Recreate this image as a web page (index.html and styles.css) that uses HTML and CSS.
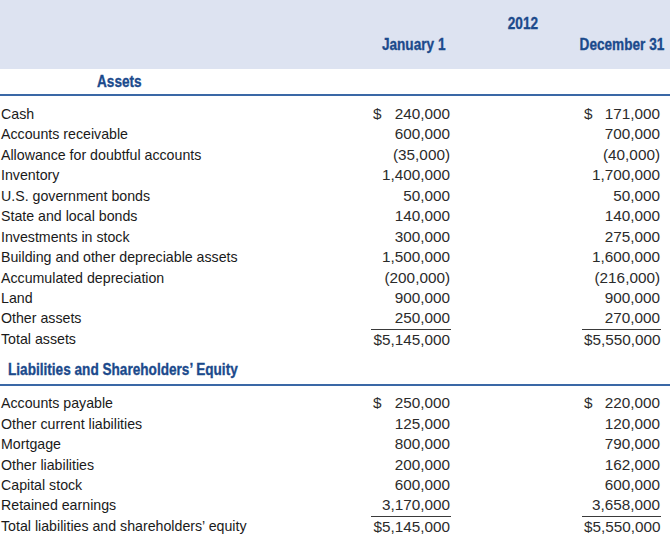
FILE: index.html
```html
<!DOCTYPE html>
<html>
<head>
<meta charset="utf-8">
<link rel="stylesheet" href="styles.css">
</head>
<body>
<div class="sheet">
  <div class="band">
    <div class="row head-row">
      <span></span>
      <span class="year"><em>2012</em></span>
    </div>
    <div class="row head-row dates">
      <span></span>
      <span class="date jan"><em>January 1</em></span>
      <span></span>
      <span class="date dec"><em>December 31</em></span>
    </div>
  </div>

  <div class="section assets-head"><em>Assets</em></div>

  <div class="rows first">
    <div class="row"><span class="label">Cash</span><span class="num"><i>$</i><b>240,000</b></span><span></span><span class="num"><i>$</i><b>171,000</b></span></div>
    <div class="row"><span class="label">Accounts receivable</span><span class="num"><b>600,000</b></span><span></span><span class="num"><b>700,000</b></span></div>
    <div class="row"><span class="label">Allowance for doubtful accounts</span><span class="num"><b>(35,000)</b></span><span></span><span class="num"><b>(40,000)</b></span></div>
    <div class="row"><span class="label">Inventory</span><span class="num"><b>1,400,000</b></span><span></span><span class="num"><b>1,700,000</b></span></div>
    <div class="row"><span class="label">U.S. government bonds</span><span class="num"><b>50,000</b></span><span></span><span class="num"><b>50,000</b></span></div>
    <div class="row"><span class="label">State and local bonds</span><span class="num"><b>140,000</b></span><span></span><span class="num"><b>140,000</b></span></div>
    <div class="row"><span class="label">Investments in stock</span><span class="num"><b>300,000</b></span><span></span><span class="num"><b>275,000</b></span></div>
    <div class="row"><span class="label">Building and other depreciable assets</span><span class="num"><b>1,500,000</b></span><span></span><span class="num"><b>1,600,000</b></span></div>
    <div class="row"><span class="label">Accumulated depreciation</span><span class="num"><b>(200,000)</b></span><span></span><span class="num"><b>(216,000)</b></span></div>
    <div class="row"><span class="label">Land</span><span class="num"><b>900,000</b></span><span></span><span class="num"><b>900,000</b></span></div>
    <div class="row"><span class="label">Other assets</span><span class="num"><b>250,000</b></span><span></span><span class="num"><b>270,000</b></span></div>
    <div class="row"><span class="label">Total assets</span><span class="num sub"><b>$5,145,000</b></span><span></span><span class="num sub"><b>$5,550,000</b></span></div>
  </div>

  <div class="section liab-head"><em>Liabilities and Shareholders’ Equity</em></div>

  <div class="rows second">
    <div class="row"><span class="label">Accounts payable</span><span class="num"><i>$</i><b>250,000</b></span><span></span><span class="num"><i>$</i><b>220,000</b></span></div>
    <div class="row"><span class="label">Other current liabilities</span><span class="num"><b>125,000</b></span><span></span><span class="num"><b>120,000</b></span></div>
    <div class="row"><span class="label">Mortgage</span><span class="num"><b>800,000</b></span><span></span><span class="num"><b>790,000</b></span></div>
    <div class="row"><span class="label">Other liabilities</span><span class="num"><b>200,000</b></span><span></span><span class="num"><b>162,000</b></span></div>
    <div class="row"><span class="label">Capital stock</span><span class="num"><b>600,000</b></span><span></span><span class="num"><b>600,000</b></span></div>
    <div class="row"><span class="label">Retained earnings</span><span class="num"><b>3,170,000</b></span><span></span><span class="num"><b>3,658,000</b></span></div>
    <div class="row"><span class="label">Total liabilities and shareholders’ equity</span><span class="num sub total"><b>$5,145,000</b></span><span></span><span class="num sub total"><b>$5,550,000</b></span></div>
  </div>
</div>
</body>
</html>
```

FILE: styles.css
```css
html, body {
  margin: 0;
  padding: 0;
  background: #ffffff;
}

.sheet {
  width: 670px;
  font-family: "Liberation Sans", Arial, sans-serif;
  color: #231f20;
}

.row {
  display: grid;
  grid-template-columns: 371px 80px 131px 79px;
  height: 20.45px;
  line-height: 20.45px;
  font-size: 14px;
}

.band {
  background: #dde3f1;
  height: 69px;
  box-sizing: border-box;
  padding-top: 14px;
}

.head-row {
  height: auto;
  font-weight: bold;
  font-size: 17px;
  color: #1b4a8c;
}

.head-row em,
.section em {
  font-style: normal;
  display: inline-block;
  white-space: nowrap;
  transform: scaleX(0.8);
  -webkit-text-stroke: 0.35px #1b4a8c;
}

.year {
  grid-column: 2 / 5;
  display: flex;
  justify-content: center;
  padding-left: 14px;
  line-height: 20px;
}

.dates {
  margin-top: 1px;
  line-height: 20px;
}

.date {
  display: flex;
  justify-content: center;
  white-space: nowrap;
}

.jan {
  padding-left: 6px;
}

.dec {
  padding-left: 0;
}

.section {
  font-weight: bold;
  font-size: 17px;
  color: #1b4a8c;
  border-bottom: 2px solid #3a68a6;
  box-sizing: border-box;
}

.section em {
  transform-origin: left center;
}

.assets-head {
  height: 27px;
  line-height: 26px;
  padding-left: 97px;
}

.liab-head {
  height: 37px;
  padding-top: 11px;
  line-height: 20px;
  padding-left: 8px;
}

.rows.first {
  padding-top: 8px;
}

.rows.second {
  padding-top: 7px;
}

.label {
  padding-left: 1px;
  white-space: nowrap;
  color: #1a1a1a;
  font-size: 14.2px;
}

.num {
  display: flex;
  justify-content: space-between;
  font-size: 15.3px;
  color: #2b2b2b;
  padding-left: 2px;
  padding-right: 1px;
}

.num i {
  font-style: normal;
}

.num b {
  font-weight: normal;
  margin-left: auto;
}

.sub {
  border-top: 1px solid #3a3a3a;
  box-sizing: border-box;
  line-height: 19px;
}

.total {
  border-bottom: 3px double #3a3a3a;
  height: 23.45px;
}
```
